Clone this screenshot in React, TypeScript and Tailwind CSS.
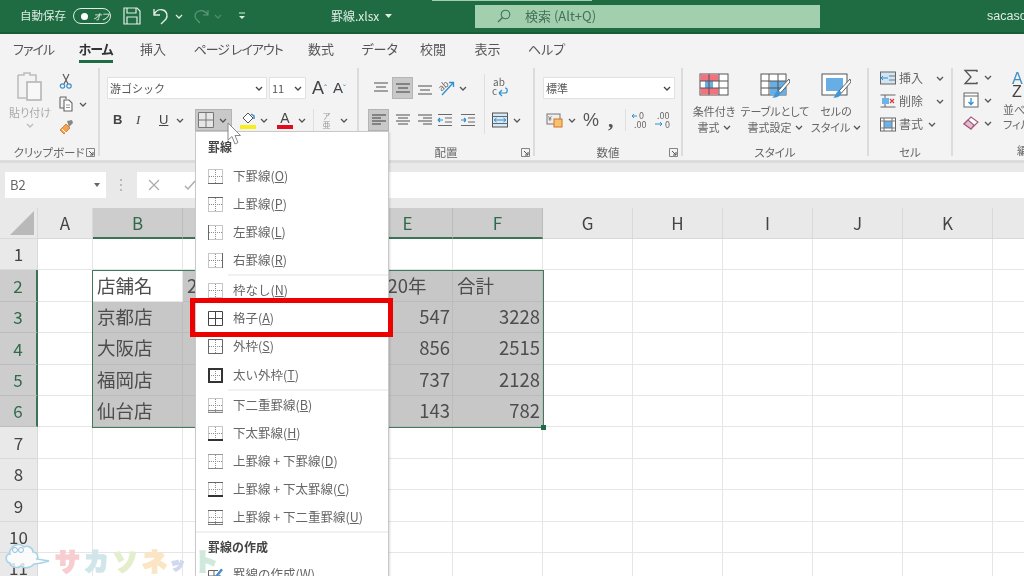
import React from 'react';

const Chev = ({ c = '#555', className = '' }: { c?: string; className?: string }) => (
  <svg width="8" height="5" viewBox="0 0 8 5" className={`shrink-0 ${className}`}><polyline points="1,1 4,4 7,1" fill="none" stroke={c} strokeWidth="1.3" /></svg>
);

const Lines = ({ rows, w = 16, h = 14, c = '#6a6a6a' }: { rows: [number, number, number][]; w?: number; h?: number; c?: string }) => (
  <svg width={w} height={h} viewBox={`0 0 ${w} ${h}`} className="shrink-0">
    {rows.map(([x1, x2, y], i) => <line key={i} x1={x1} x2={x2} y1={y} y2={y} stroke={c} strokeWidth="1.2" />)}
  </svg>
);

const Launcher = () => (
  <svg width="9" height="9" viewBox="0 0 9 9" className="shrink-0"><path d="M0.5 8.5V0.5H8.5V8.5Z" fill="none" stroke="#777" strokeWidth="0.9" /><path d="M3 3L7 7M7 4V7H4" fill="none" stroke="#555" strokeWidth="1" /></svg>
);

const Group = ({ w, label, launcher, children }: { w: string; label: string; launcher?: boolean; children: React.ReactNode }) => (
  <div className={`${w} shrink-0 flex flex-col h-[88px] mt-[4px] border-r-2 border-[#dcdcdc]`}>
    <div className="h-[77px] pt-[9px] shrink-0">{children}</div>
    <div className="grid grid-cols-[1fr_auto_1fr] items-center h-[14px] shrink-0 text-[11.5px] text-[#666] [font-feature-settings:'palt'] whitespace-nowrap">
      <span />
      <span className="leading-[14px]">{label}</span>
      <span className="flex justify-end pr-[3px]">{launcher && <Launcher />}</span>
    </div>
  </div>
);

const Combo = ({ w, children, ml = '' }: { w: string; children: React.ReactNode; ml?: string }) => (
  <div className={`${w} ${ml} h-[22px] bg-white border border-[#e2e2e2] flex items-center justify-between pl-[2px] pr-[3px] text-[11px] text-[#555] shrink-0`}>
    <span>{children}</span><Chev c="#444" />
  </div>
);

type B = 'top' | 'bottom' | 'left' | 'right' | 'none' | 'grid' | 'outer' | 'thick' | 'dbl' | 'thickb' | 'tb' | 'tthickb' | 'tdbl';
const BorderIcon = ({ t }: { t: B }) => {
  const dark = t === 'grid' ? '#444' : '#666';
  const dot = <g stroke="#8d8d8d" strokeWidth="1" strokeDasharray="1 1" fill="none"><path d="M0.5 0.5H14.5V14.5H0.5ZM7.5 1V14M1 7.5H14" /></g>;
  const line = (d: string, w = 1, c = dark) => <path d={d} stroke={c} strokeWidth={w} fill="none" />;
  const T = 'M0 0.5H15', Bo = 'M0 14.5H15', L = 'M0.5 0V15', R = 'M14.5 0V15';
  return (
    <svg width="15" height="15" viewBox="0 0 15 15" className="shrink-0">
      {t !== 'grid' && dot}
      {t === 'bottom' && line(Bo)}
      {t === 'top' && line(T)}
      {t === 'left' && line(L)}
      {t === 'right' && line(R)}
      {t === 'grid' && line('M0.5 0.5H14.5V14.5H0.5ZM7.5 0V15M0 7.5H15')}
      {t === 'outer' && line('M0.5 0.5H14.5V14.5H0.5Z')}
      {t === 'thick' && line('M1 1H14V14H1Z', 2, '#333')}
      {t === 'dbl' && <>{line('M0 12.5H15', 1, '#888')}{line('M0 14.5H15', 1.4, '#888')}</>}
      {t === 'thickb' && line('M0 14H15', 2, '#333')}
      {t === 'tb' && <>{line(T, 1, '#999')}{line(Bo, 1, '#888')}</>}
      {t === 'tthickb' && <>{line(T, 1)}{line('M0 14H15', 2, '#333')}</>}
      {t === 'tdbl' && <>{line(T, 1)}{line('M0 12.5H15', 1, '#777')}{line('M0 14.5H15', 1, '#777')}</>}
    </svg>
  );
};

const Item = ({ t, label, k, h = 'h-[28px]' }: { t: B; label: string; k: string; h?: string }) => (
  <div className={`${h} flex items-center pl-[12px] gap-[10px] text-[12.5px] text-[#666] shrink-0`}>
    <BorderIcon t={t} />
    <span>{label}(<span className="underline">{k}</span>)</span>
  </div>
);

const Sep = ({ ml = 'ml-[32px]' }: { ml?: string }) => <div className={`${ml} h-[2px] bg-[#f1f1f1] shrink-0`} />;

const Menu = () => (
  <div className="absolute left-[195px] top-[131px] w-[194px] h-[445px] bg-white border-x border-t border-[#c9c9c9] shadow-[1px_1px_2px_rgba(0,0,0,0.15)] flex flex-col overflow-hidden">
    <div className="h-[30px] flex items-center pl-[12px] text-[12px] font-bold text-[#444] shrink-0">罫線</div>
    <Item t="bottom" label="下罫線" k="O" />
    <Item t="top" label="上罫線" k="P" />
    <Item t="left" label="左罫線" k="L" />
    <Item t="right" label="右罫線" k="R" />
    <Sep />
    <Item t="none" label="枠なし" k="N" h="h-[28.3px]" />
    <Item t="grid" label="格子" k="A" h="h-[28.3px]" />
    <Item t="outer" label="外枠" k="S" h="h-[28.3px]" />
    <Item t="thick" label="太い外枠" k="T" h="h-[28.3px]" />
    <Sep />
    <Item t="dbl" label="下二重罫線" k="B" />
    <Item t="thickb" label="下太罫線" k="H" />
    <Item t="tb" label="上罫線 + 下罫線" k="D" />
    <Item t="tthickb" label="上罫線 + 下太罫線" k="C" />
    <Item t="tdbl" label="上罫線 + 下二重罫線" k="U" />
    <Sep ml="ml-0" />
    <div className="h-[27px] flex items-center pl-[12px] text-[12px] font-bold text-[#444] shrink-0">罫線の作成</div>
    <div className="h-[28px] flex items-center pl-[12px] gap-[10px] text-[12.5px] text-[#666] shrink-0">
      <svg width="15" height="15" viewBox="0 0 15 15" className="shrink-0"><path d="M0.5 3.5H10M0.5 3.5V14.5H12V8M6 3.5V14.5M0.5 9H12" stroke="#666" fill="none" /><path d="M7 9L13 1.5L15 3L9 10.5L6.5 11.5Z" fill="#4a90d0" /></svg>
      <span>罫線の作成(<span className="underline">W</span>)</span>
    </div>
  </div>
);

const TableIcon = ({ children }: { children: React.ReactNode }) => (
  <svg width="30" height="30" viewBox="0 0 30 30" className="shrink-0 -mt-[6px]">{children}</svg>
);
const Brush = () => (
  <g>
    <path d="M29 8L18 20L20.5 22L30 11Z" fill="#fff" stroke="#555" strokeWidth="0.9" />
    <path d="M16.5 20.5C19 19 21 21.5 20 23.5C18.5 26.5 14 27 12 26.5C14.5 25.5 14.5 22.5 16.5 20.5Z" fill="#3f97d8" />
  </g>
);

const Small = ({ children, w = 16, h = 16 }: { children: React.ReactNode; w?: number; h?: number }) => (
  <svg width={w} height={h} viewBox={`0 0 ${w} ${h}`} className="shrink-0">{children}</svg>
);

const Ribbon = () => (
  <div className="h-[96px] bg-[#f3f3f3] flex shrink-0 overflow-hidden">
    {/* clipboard */}
    <Group w="w-[100px]" label="クリップボード" launcher>
      <div className="flex h-[65px]">
        <div className="w-[58px] flex flex-col items-center pl-[2px] shrink-0">
          <svg width="30" height="32" viewBox="0 0 30 32" className="-mt-[6px] shrink-0"><path d="M3 4H9V2H15V4H21V10M3 4V27H11" fill="none" stroke="#bdbdbd" strokeWidth="1.6" /><rect x="12" y="11" width="14" height="18" fill="#f8f8f8" stroke="#b5b5b5" strokeWidth="1.6" /></svg>
          <span className="text-[11px] leading-[14px] text-[#aaa] mt-[2px] [font-feature-settings:'palt'] whitespace-nowrap">貼り付け</span>
          <Chev c="#bbb" className="mt-[4px]" />
        </div>
        <div className="flex flex-col gap-[7px] -mt-[4px]">
          <Small>
            <path d="M5 1L10 11M11 1L6 11" stroke="#555" strokeWidth="1.1" fill="none" /><circle cx="4.5" cy="13" r="2.2" fill="none" stroke="#3f8fc8" strokeWidth="1.2" /><circle cx="11" cy="13" r="2.2" fill="none" stroke="#3f8fc8" strokeWidth="1.2" />
          </Small>
          <div className="flex items-center gap-[5px]">
            <Small><path d="M2 1H8V3M2 1V12H6" stroke="#666" fill="none" strokeWidth="1.1" /><path d="M6 4H11L14 7V15H6Z" fill="#fff" stroke="#666" strokeWidth="1.1" /><path d="M8 9H12M8 11.5H12" stroke="#999" /></Small>
            <Chev />
          </div>
          <Small>
            <path d="M9 2L14 1L15 4L11 8Z" fill="#888" /><path d="M2 11L8 5L12 9L6 15Z" fill="#f3a250" stroke="#c8741e" strokeWidth="0.8" /><path d="M4 10L8 14" stroke="#fff" />
          </Small>
        </div>
      </div>
    </Group>
    {/* font */}
    <Group w="w-[259px]" label="フォント">
      <div className="flex items-center pl-[7px] h-[22px]">
        <Combo w="w-[160px]">游ゴシック</Combo>
        <Combo w="w-[37px]" ml="ml-[2px]">11</Combo>
        <span className="ml-[6px] text-[18px] leading-[22px] text-[#444] font-['Liberation_Sans',sans-serif] whitespace-nowrap">A<span className="text-[9px] align-top text-[#3f8fc8]">ˆ</span></span>
        <span className="ml-[6px] text-[15px] leading-[22px] text-[#444] font-['Liberation_Sans',sans-serif] whitespace-nowrap">A<span className="text-[9px] align-top text-[#3f8fc8]">ˇ</span></span>
      </div>
      <div className="flex items-center h-[22px] mt-[10px] pl-[13px] text-[#444]">
        <span className="w-[23px] text-[13px] font-bold font-['Liberation_Sans',sans-serif]">B</span>
        <span className="w-[23px] text-[13px] italic font-['Liberation_Serif',serif]">I</span>
        <span className="w-[17px] text-[13px] underline font-['Liberation_Sans',sans-serif]">U</span>
        <Chev />
        <div className="ml-[11px] w-[37px] h-[22px] bg-[#c9c9c9] border border-[#b4b4b4] flex items-center pl-[2px] gap-[5px] shrink-0">
          <svg width="16" height="16" viewBox="0 0 16 16"><path d="M0.5 0.5H15.5V15.5H0.5ZM8 0V16M0 8H16" stroke="#777" fill="#e6e6e6" strokeWidth="1" /></svg>
          <Chev />
        </div>
        <div className="ml-[8px] flex flex-col items-center w-[16px] shrink-0">
          <Small h={13}><path d="M3 6L8 1L13 6L8 11Z" fill="#fff" stroke="#555" /><path d="M11 2L14 4V7" stroke="#3f8fc8" fill="none" strokeWidth="1.5" /></Small>
          <div className="w-[16px] h-[4px] bg-[#f8ee1e]" />
        </div>
        <Chev className="ml-[4px]" />
        <div className="ml-[9px] flex flex-col items-center w-[16px] shrink-0">
          <span className="text-[14px] leading-[13px] text-[#444] font-['Liberation_Sans',sans-serif]">A</span>
          <div className="w-[16px] h-[4px] bg-[#e00b1c]" />
        </div>
        <Chev className="ml-[5px]" />
        <div className="ml-[7px] w-px h-[22px] bg-[#dedede] shrink-0" />
        <div className="ml-[7px] w-[11px] flex flex-col items-center text-[8px] leading-[9px] text-[#999] shrink-0"><span>ア</span><span>亜</span></div>
        <Chev className="ml-[8px]" />
      </div>
    </Group>
    {/* alignment */}
    <Group w="w-[176px]" label="配置" launcher>
      <div className="flex items-start">
        <div className="w-[125px] shrink-0">
          <div className="flex items-center h-[22px] pl-[11px]">
            <div className="w-[21px] flex justify-center"><Lines rows={[[1, 15, 2], [3, 13, 6], [1, 15, 10]]} /></div>
            <div className="ml-[1px] w-[21px] h-[22px] bg-[#c9c9c9] border border-[#b4b4b4] flex items-center justify-center"><Lines rows={[[1, 15, 3], [3, 13, 7], [1, 15, 11]]} c="#555" /></div>
            <div className="ml-[1px] w-[21px] flex justify-center"><Lines rows={[[1, 15, 5], [3, 13, 9], [1, 15, 13]]} /></div>
            <svg width="18" height="18" viewBox="0 0 18 18" className="ml-[3px]"><text x="1" y="10" fontSize="9" fill="#666" transform="rotate(-40 6 8)">ab</text><path d="M4 16L15 4M11 3.5H15.5V8" stroke="#2f8fd0" fill="none" strokeWidth="1.3" /></svg>
            <Chev className="ml-[3px]" />
          </div>
          <div className="flex items-center h-[22px] mt-[10px] pl-[9px]">
            <div className="w-[21px] h-[22px] bg-[#c9c9c9] border border-[#b4b4b4] flex items-center justify-center"><Lines rows={[[1, 15, 2], [1, 10, 5], [1, 15, 8], [1, 10, 11]]} c="#555" /></div>
            <div className="ml-[3px] w-[21px] flex justify-center"><Lines rows={[[1, 15, 2], [3, 13, 5], [1, 15, 8], [3, 13, 11]]} /></div>
            <div className="ml-[1px] w-[21px] flex justify-center"><Lines rows={[[1, 15, 2], [6, 15, 5], [1, 15, 8], [6, 15, 11]]} /></div>
            <svg width="16" height="14" viewBox="0 0 16 14" className="ml-[2px] shrink-0"><path d="M1 1.5H15M8 5H15M8 9H15M1 12.5H15" stroke="#6a6a6a" strokeWidth="1.2" /><path d="M1 7H6M1 7L3 5M1 7L3 9" stroke="#2f8fd0" fill="none" strokeWidth="1.2" /></svg>
            <svg width="16" height="14" viewBox="0 0 16 14" className="ml-[7px] shrink-0"><path d="M1 1.5H15M8 5H15M8 9H15M1 12.5H15" stroke="#6a6a6a" strokeWidth="1.2" /><path d="M1 7H6M6 7L4 5M6 7L4 9" stroke="#2f8fd0" fill="none" strokeWidth="1.2" /></svg>
          </div>
        </div>
        <div className="w-px h-[60px] -mt-[3px] bg-[#dedede] shrink-0" />
        <div className="flex flex-col pl-[6px]">
          <svg width="20" height="22" viewBox="0 0 20 22" className="shrink-0"><text x="2" y="9" fontSize="10" fill="#666">ab</text><text x="1" y="18" fontSize="10" fill="#666">c</text><path d="M8 16H14C17 16 17 11 14 11M8 16L11 13M8 16L11 19" stroke="#2f8fd0" fill="none" strokeWidth="1.2" /></svg>
          <div className="flex items-center h-[22px] mt-[10px] pl-[1px]">
            <svg width="16" height="16" viewBox="0 0 16 16" className="shrink-0"><rect x="0.5" y="1" width="15" height="14" fill="#d7e9f6" stroke="#555" /><path d="M0.5 4.5H15.5M0.5 11.5H15.5" stroke="#666" /><path d="M2 8H14M2 8L4.5 6M2 8L4.5 10M14 8L11.5 6M14 8L11.5 10" stroke="#2f8fd0" fill="none" /></svg>
            <Chev className="ml-[5px]" />
          </div>
        </div>
      </div>
    </Group>
    {/* number */}
    <Group w="w-[148px]" label="数値" launcher>
      <div className="pl-[8px]"><Combo w="w-[132px]">標準</Combo></div>
      <div className="flex items-center h-[22px] mt-[10px] pl-[11px] text-[#555]">
        <Small w={17} h={16}><rect x="1" y="2" width="13" height="10" fill="#eee" stroke="#777" /><text x="2" y="9" fontSize="7" fill="#555">¥</text><rect x="8" y="7" width="8" height="8" fill="#f6c26b" stroke="#d0722a" /></Small>
        <Chev className="ml-[5px]" />
        <span className="ml-[7px] w-[19px] text-[18px] leading-[22px] font-['Liberation_Sans',sans-serif]">%</span>
        <span className="ml-[6px] w-[10px] text-[22px] leading-[16px] font-bold font-['Liberation_Serif',serif]">,</span>
        <div className="ml-[7px] w-px h-[22px] bg-[#dedede]" />
        <svg width="18" height="18" viewBox="0 0 18 18" className="ml-[5px] shrink-0"><text x="8" y="8" fontSize="9" fill="#666">0</text><text x="3" y="17" fontSize="9" fill="#666">.00</text><path d="M1 5H6M1 5L3 3M1 5L3 7" stroke="#2f8fd0" fill="none" /></svg>
        <svg width="18" height="18" viewBox="0 0 18 18" className="ml-[5px] shrink-0"><text x="3" y="8" fontSize="9" fill="#666">.00</text><text x="11" y="17" fontSize="9" fill="#666">0</text><path d="M1 13H8M8 13L6 11M8 13L6 15" stroke="#2f8fd0" fill="none" /></svg>
      </div>
    </Group>
    {/* style */}
    <Group w="w-[186px]" label="スタイル">
      <div className="flex text-[11px] leading-[16px] text-[#666] [font-feature-settings:'palt']">
        <div className="w-[60px] ml-[1px] flex flex-col items-center shrink-0">
          <TableIcon><rect x="1" y="3" width="28" height="21" fill="#fff" stroke="#555" /><rect x="1.5" y="3.5" width="18" height="6.5" fill="#f2727f" /><rect x="1.5" y="17" width="18" height="6.5" fill="#f2727f" /><rect x="6" y="10" width="8" height="7" fill="#67aee6" /><path d="M1 10H29M1 17H29M10 3V24M20 3V24" stroke="#555" fill="none" /></TableIcon>
          <span className="mt-[2px] whitespace-nowrap">条件付き</span>
          <span className="flex items-center gap-[3px] whitespace-nowrap">書式<Chev /></span>
        </div>
        <div className="w-[62px] flex flex-col items-center shrink-0">
          <TableIcon><rect x="1" y="3" width="25" height="21" fill="#fff" stroke="#555" /><rect x="10" y="10" width="16" height="14" fill="#67aee6" /><path d="M1 10H26M1 17H26M9 3V24M18 3V24" stroke="#555" fill="none" /><Brush /></TableIcon>
          <span className="mt-[2px] whitespace-nowrap">テーブルとして</span>
          <span className="flex items-center gap-[3px] whitespace-nowrap">書式設定<Chev /></span>
        </div>
        <div className="w-[60px] flex flex-col items-center shrink-0">
          <TableIcon><rect x="1" y="3" width="25" height="21" fill="#fff" stroke="#555" /><rect x="5" y="7" width="17" height="13" fill="#67aee6" /><Brush /></TableIcon>
          <span className="mt-[2px] whitespace-nowrap">セルの</span>
          <span className="flex items-center gap-[3px] whitespace-nowrap">スタイル<Chev /></span>
        </div>
      </div>
    </Group>
    {/* cells */}
    <Group w="w-[84px]" label="セル">
      <div className="flex flex-col gap-[7px] pl-[11px] -mt-[7px] text-[12px] leading-[16px] text-[#666]">
        <div className="flex items-center h-[16px]">
          <Small><rect x="0.5" y="2" width="15" height="12" fill="#cfe4f4" stroke="#666" /><path d="M9 6H15M9 10H15" stroke="#777" /><path d="M8 8H1M1 8L3 6M1 8L3 10" stroke="#2f8fd0" fill="none" /></Small>
          <span className="ml-[3px] w-[37px]">挿入</span><Chev />
        </div>
        <div className="flex items-center h-[16px]">
          <Small><path d="M0.5 2H15.5M0.5 14H15.5M5 2V14" stroke="#666" fill="none" /><rect x="2" y="5" width="7" height="6" fill="#6fb2e6" /><path d="M10 6L14 10M14 6L10 10" stroke="#d83a3a" strokeWidth="1.2" /></Small>
          <span className="ml-[3px] w-[37px]">削除</span><Chev />
        </div>
        <div className="flex items-center h-[16px]">
          <Small><rect x="0.5" y="2" width="15" height="13" fill="#fff" stroke="#666" /><rect x="4" y="5" width="8" height="7" fill="#6fb2e6" /><path d="M4 2V15M12 2V15M0.5 5H15.5M0.5 12H15.5" stroke="#777" /></Small>
          <span className="ml-[3px] w-[29px]">書式</span><Chev />
        </div>
      </div>
    </Group>
    {/* edit */}
    <div className="flex h-[88px] mt-[4px] flex-1 min-w-0">
      <div className="flex flex-col gap-[7px] w-[47px] pl-[10px] pt-[1px] shrink-0">
        <div className="flex items-center gap-[5px] h-[16px]">
          <Small><path d="M14 3V1.5H2L8 8L2 14.5H14V13" fill="none" stroke="#555" strokeWidth="1.3" /></Small><Chev />
        </div>
        <div className="flex items-center gap-[5px] h-[16px]">
          <Small><rect x="1" y="1" width="14" height="14" fill="#fff" stroke="#666" /><path d="M1 4H15" stroke="#666" /><path d="M8 6V12M5.5 10L8 12.5L10.5 10" stroke="#2f8fd0" fill="none" strokeWidth="1.3" /></Small><Chev />
        </div>
        <div className="flex items-center gap-[5px] h-[16px]">
          <Small><path d="M1 9L8 2L15 7L8 14Z" fill="#fff" stroke="#a05a7a" strokeWidth="1.1" /><path d="M1 9L5 5L11 10L8 14Z" fill="#e9b9cf" stroke="#a05a7a" strokeWidth="1.1" /></Small><Chev />
        </div>
      </div>
      <div className="flex flex-col items-start pl-[3px] text-[11px] leading-[15px] text-[#666] whitespace-nowrap">
        <span className="pl-[9px] mt-[4px] text-[16px] leading-[13px] text-[#3f8fc8] font-['Liberation_Sans',sans-serif]">A</span>
        <span className="pl-[9px] text-[16px] leading-[13px] text-[#444] font-['Liberation_Sans',sans-serif]">Z</span>
        <span className="mt-[4px]">並べ替えと</span>
        <span className="[font-feature-settings:'palt']">フィルター</span>
        <span className="pl-[14px] mt-[11px]">編集</span>
      </div>
    </div>
  </div>
);

const colNames = ['A', 'B', 'C', 'D', 'E', 'F', 'G', 'H', 'I', 'J', 'K', 'L'];
const selCols = ['B', 'C', 'D', 'E', 'F'];
const data: Record<number, (string | number)[]> = {
  2: ['店舗名', '2018年', '2019年', '2020年', '合計'],
  3: ['京都店', 1352, 1329, 547, 3228],
  4: ['大阪店', 812, 847, 856, 2515],
  5: ['福岡店', 741, 650, 737, 2128],
  6: ['仙台店', 312, 327, 143, 782],
};

const Sheet = () => {
  const rows = [1, 2, 3, 4, 5, 6, 7, 8, 9, 10, 11];
  return (
    <div className="relative w-[1083px]">
      <div className="grid grid-cols-[38px_55px_repeat(11,90px)] grid-rows-[31px_repeat(11,31.4px)] bg-white text-[#4d4d4d] w-[1083px]">
        <div className="bg-[#e9e9e9] border-r border-b border-[#d9d9d9] flex items-center justify-center">
          <svg width="26" height="26" viewBox="0 0 26 26" className="ml-[6px]"><path d="M25 1V25H1Z" fill="#b9b9b9" /></svg>
        </div>
        {colNames.map((c) => {
          const s = selCols.includes(c);
          return (
            <div key={c} className={s
              ? 'bg-[#cdcdcd] text-[#2f6a4b] border-r border-[#bcbcbc] border-b-2 border-b-[#3a7355] flex items-center justify-center text-[17px]'
              : 'bg-[#e9e9e9] text-[#444] border-r border-b border-[#d9d9d9] flex items-center justify-center text-[17px]'}>{c}</div>
          );
        })}
        {rows.map((r) => {
          const sr = r >= 2 && r <= 6;
          return (
            <React.Fragment key={r}>
              <div className={sr
                ? 'bg-[#cdcdcd] text-[#2f6a4b] border-b border-[#bcbcbc] border-r-2 border-r-[#3a7355] flex items-center justify-center text-[17px]'
                : 'bg-[#e9e9e9] text-[#444] border-r border-b border-[#d9d9d9] flex items-center justify-center text-[17px]'}>{r}</div>
              {colNames.map((c) => {
                const i = selCols.indexOf(c);
                const inSel = sr && i >= 0;
                const v = inSel ? data[r][i] : '';
                const active = r === 2 && c === 'B';
                const num = typeof v === 'number';
                return (
                  <div key={c} className={`border-r border-b flex items-center text-[18.5px] whitespace-nowrap ${num ? 'justify-end pr-[2px]' : 'justify-start pl-[4px]'} ${inSel && !active ? 'bg-[#c7c7c7] border-[#bcbcbc]' : 'bg-white border-[#e6e6e6]'}`}>
                    <span>{v}</span>
                  </div>
                );
              })}
            </React.Fragment>
          );
        })}
      </div>
      <div className="absolute left-[92px] top-[62px] w-[452px] h-[158px] border-[1.5px] border-[#3f7a5c] pointer-events-none">
        <div className="absolute -right-[3px] -bottom-[3px] w-[5px] h-[5px] bg-[#1f6b42]" />
      </div>
    </div>
  );
};

export default function App() {
  return (
    <div className="relative w-[1024px] h-[576px] overflow-hidden bg-white flex flex-col blur-[0.35px] font-['Noto_Sans_CJK_JP','Noto_Sans',sans-serif]">
      {/* title bar */}
      <div className="relative h-[34px] shrink-0 bg-[#1f6b42] border-b-2 border-[#195c38] flex items-center text-[#dfeee5]">
        <div className="absolute left-[432px] top-0 w-[160px] h-px bg-[#a5cdb3]" />
        <div className="w-[331px] shrink-0 flex items-center pl-[20px]">
          <span className="text-[11.5px] w-[46px] whitespace-nowrap">自動保存</span>
          <div className="ml-[7px] w-[38px] h-[16px] rounded-full border border-[#dfeee5] flex items-center pl-[7px] gap-[5px] text-[9px] italic leading-none whitespace-nowrap shrink-0">
            <span className="w-[7px] h-[7px] rounded-full bg-white shrink-0" /><span className="[font-feature-settings:'palt']">オフ</span>
          </div>
          <svg width="18" height="18" viewBox="0 0 18 18" className="ml-[12px] shrink-0"><path d="M1 1H14L17 4V17H1Z" fill="none" stroke="#dfeee5" strokeWidth="1.2" /><path d="M4 1V6H13V1M4 17V10H14V17" fill="none" stroke="#dfeee5" strokeWidth="1.2" /></svg>
          <svg width="18" height="18" viewBox="0 0 18 18" className="ml-[11px] shrink-0"><path d="M2 2V8H8M2 8C4 3 8 2 11 3C15 4 16 9 14 12L9 17" fill="none" stroke="#dfeee5" strokeWidth="1.4" /></svg>
          <Chev c="#dfeee5" className="ml-[5px]" />
          <svg width="16" height="16" viewBox="0 0 16 16" className="ml-[10px] shrink-0"><path d="M15 2V7H10M15 7C13 3 9 2 6 3C2 4 1 8 3 11L7 15" fill="none" stroke="#5f9a7b" strokeWidth="1.1" /></svg>
          <Chev c="#4f8a6b" className="ml-[5px]" />
          <svg width="8" height="8" viewBox="0 0 8 8" className="ml-[16px] shrink-0"><path d="M1 1H7" stroke="#dfeee5" /><path d="M1 4L4 7L7 4Z" fill="#dfeee5" /></svg>
        </div>
        <div className="w-[144px] shrink-0 flex items-center gap-[6px] text-[12px]">
          <span>罫線.xlsx</span>
          <svg width="7" height="4" viewBox="0 0 7 4"><path d="M0 0H7L3.5 4Z" fill="#dfeee5" /></svg>
        </div>
        <div className="w-[345px] h-[23px] shrink-0 bg-[#a2d0ae] flex items-center pl-[22px] text-[#44705a] text-[13px]">
          <svg width="14" height="14" viewBox="0 0 14 14" className="mr-[14px] shrink-0"><circle cx="8.5" cy="5.5" r="4.3" fill="none" stroke="#44705a" strokeWidth="1.1" /><path d="M5.5 8.5L1 13" stroke="#44705a" strokeWidth="1.3" /></svg>
          <span>検索 (Alt+Q)</span>
        </div>
        <span className="ml-[167px] text-[12.5px] whitespace-nowrap font-['Liberation_Sans',sans-serif]">sacasonet</span>
      </div>
      {/* tabs */}
      <div className="h-[30px] shrink-0 bg-[#f3f3f3] flex items-center pl-[13px] gap-[27.5px] text-[13px] text-[#555] whitespace-nowrap [font-feature-settings:'palt']">
        <span className="w-[38px] tracking-[-1px]">ファイル</span>
        <span className="relative w-[34px] font-bold text-[#333] tracking-[-1px]">ホーム<span className="absolute left-0 right-0 -bottom-[4px] h-[3px] bg-[#1f6b42]" /></span>
        <span className="w-[26px]">挿入</span>
        <span className="w-[87px] tracking-[-1px]">ページ レイアウト</span>
        <span className="w-[26px]">数式</span>
        <span className="w-[31px]">データ</span>
        <span className="w-[27px]">校閲</span>
        <span className="w-[26px]">表示</span>
        <span className="w-[32px]">ヘルプ</span>
      </div>
      <Ribbon />
      {/* formula bar */}
      <div className="h-[48px] shrink-0 bg-[#e9e9e9] border-t-[3px] border-[#dcdcdc] flex items-start pt-[9px]">
        <div className="ml-[5px] w-[101px] h-[26px] bg-white flex items-center justify-between pl-[5px] pr-[6px] text-[13px] text-[#666] shrink-0">
          <span>B2</span><svg width="6" height="4" viewBox="0 0 6 4"><path d="M0 0H6L3 4Z" fill="#666" /></svg>
        </div>
        <svg width="4" height="12" viewBox="0 0 4 12" className="ml-[13px] mt-[7px] shrink-0"><path d="M2 0V2M2 5V7M2 10V12" stroke="#aaa" strokeWidth="1.5" /></svg>
        <div className="ml-[14px] flex-1 h-[26px] bg-white flex items-center pl-[11px] gap-[24px]">
          <svg width="12" height="12" viewBox="0 0 12 12"><path d="M1 1L11 11M11 1L1 11" stroke="#aaa" strokeWidth="1.2" /></svg>
          <svg width="12" height="12" viewBox="0 0 12 12"><path d="M1 7L4 10L11 2" stroke="#aaa" strokeWidth="1.4" fill="none" /></svg>
        </div>
      </div>
      <Sheet />

      {/* overlays */}
      <Menu />
      <div className="absolute left-[190px] top-[298px] w-[203px] h-[39px] border-[5px] border-[#ec0000]" />
      <svg width="16" height="24" viewBox="0 0 16 24" className="absolute left-[227px] top-[122px]"><path d="M1 1V18L5 14.5L8 22L11 20.5L8 13.5H13.5Z" fill="#fff" stroke="#888" strokeWidth="1" /></svg>

      {/* watermark */}
      <svg width="46" height="30" viewBox="0 0 46 30" className="absolute left-[4px] top-[542px]"><path d="M8 6C10 2 17 1 20 5C24 3 29 6 29 10C33 10 35 14 33 17L45 19C38 21 34 22 30 22C27 26 20 27 17 24C13 27 6 25 6 21C1 20 1 12 6 12C5 10 6 8 8 6Z" fill="#ffffffcc" stroke="#a8d2e8" strokeWidth="1.6" /><circle cx="11" cy="8" r="2.5" fill="none" stroke="#8fc0dc" /><circle cx="17" cy="8" r="2.5" fill="none" stroke="#8fc0dc" /></svg>
      <div className="absolute left-[55px] top-[540px] flex items-center font-black text-[25px] leading-[34px] [-webkit-text-stroke:1.5px_currentColor]">
        <span className="w-[29px] text-[#f7cdd0]">サ</span>
        <span className="w-[29px] text-[#d0e6ea]">カ</span>
        <span className="w-[29px] text-[#e3efcc]">ソ</span>
        <span className="w-[28px] text-[#fbe5c4]">ネ</span>
        <span className="w-[23px] text-[15px] text-[#d0d9ee] pt-[6px]">ッ</span>
        <span className="w-[24px] text-[#cfeadd]">ト</span>
      </div>
    </div>
  );
}
